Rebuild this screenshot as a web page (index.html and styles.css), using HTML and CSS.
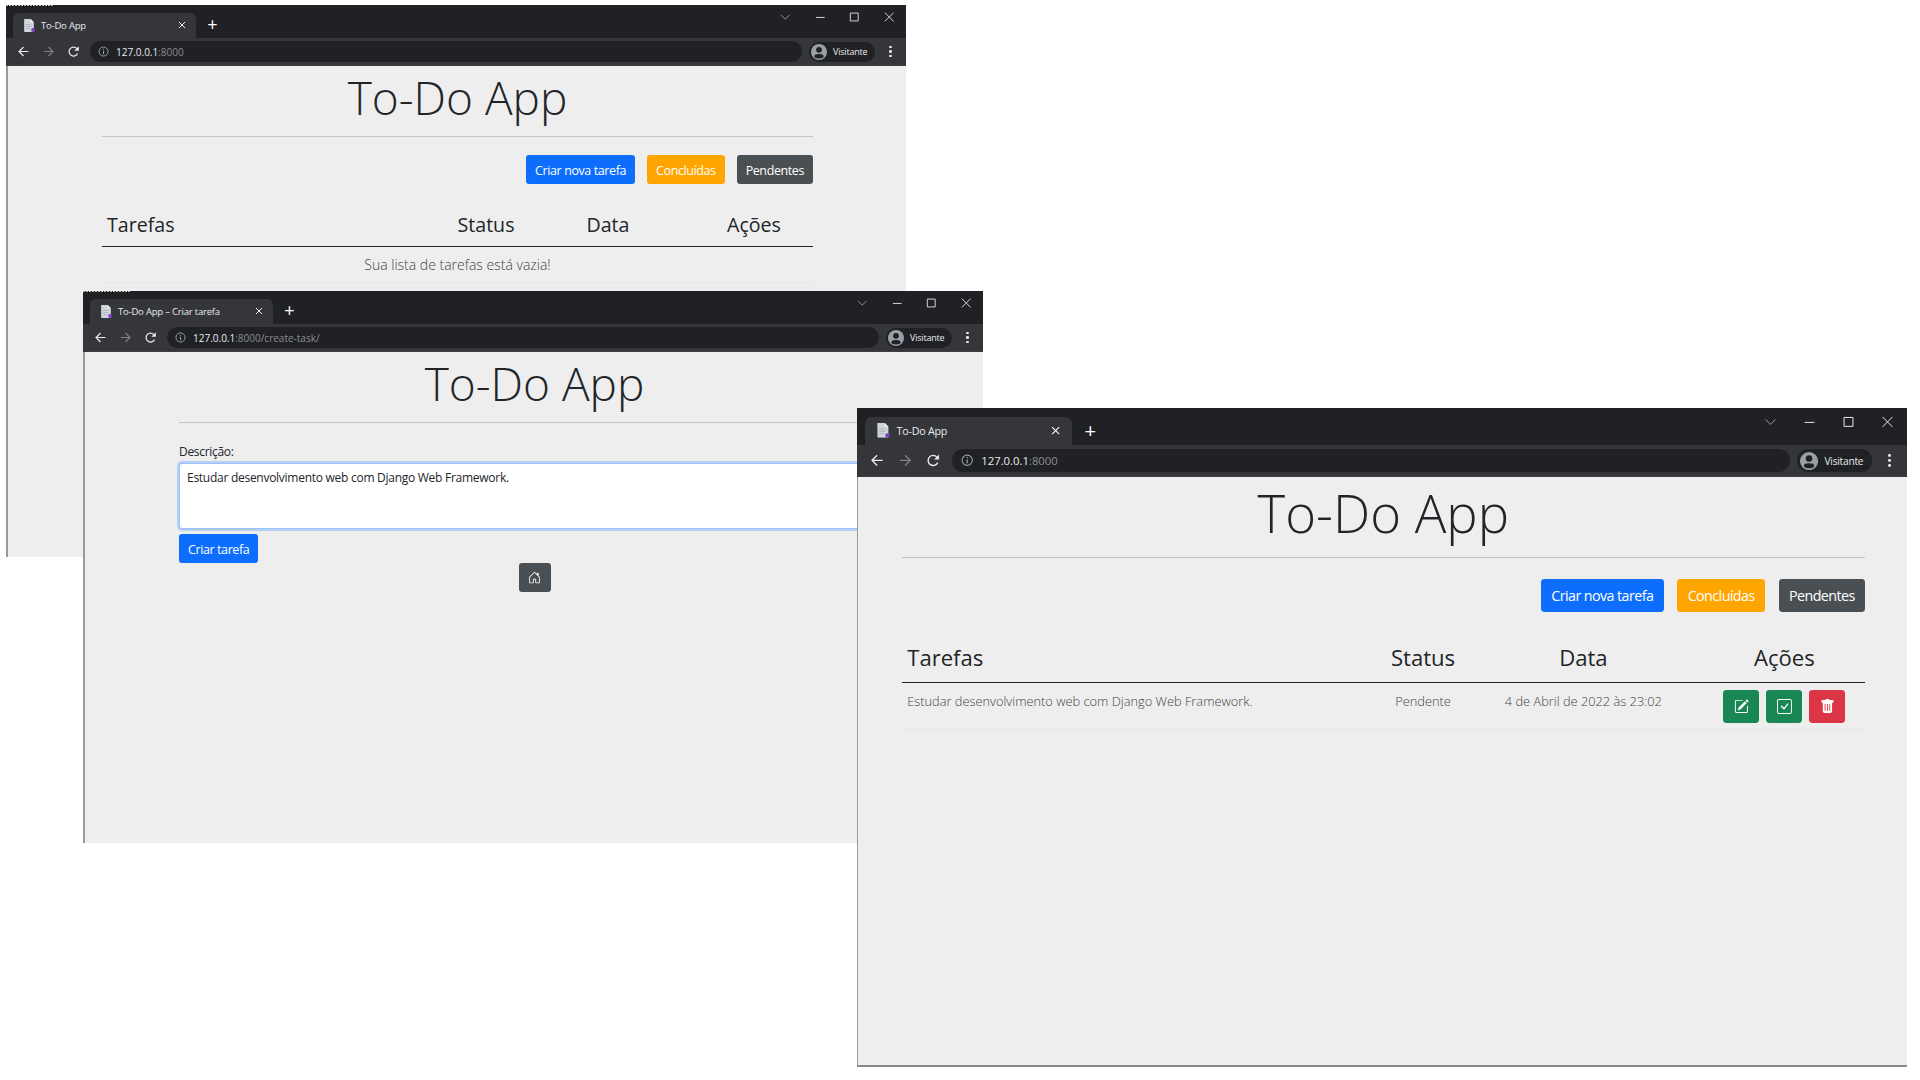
FILE: index.html
```html
<!DOCTYPE html>
<html lang="pt-BR">
<head>
    <meta charset="UTF-8" />
    <title>To-Do App</title>
    <link rel="stylesheet" href="styles.css">
</head>
<body>

<svg class="sprite" xmlns="http://www.w3.org/2000/svg">
    <symbol id="doc" viewBox="0 0 16 16">
        <path fill="#cfd3da" d="M2 0h8l4 4v11a1 1 0 0 1-1 1H3a1 1 0 0 1-1-1z"/>
        <path fill="#f1f3f4" d="M10 0l4 4h-4z"/>
        <path fill="#aab0ba" d="M4 6h7v1H4zM4 8.500h7v1H4zM4 11h5v1H4z"/>
        <circle fill="#7b3fc4" cx="13" cy="13.500" r="2.400"/>
    </symbol>
    <symbol id="back" viewBox="0 0 16 16">
        <path fill="none" stroke="currentColor" stroke-width="1.500" d="M14 8H2.500M8 2.500 2.500 8 8 13.500"/>
    </symbol>
    <symbol id="forward" viewBox="0 0 16 16">
        <path fill="none" stroke="currentColor" stroke-width="1.500" d="M2 8h11.500M8 2.500 13.500 8 8 13.500"/>
    </symbol>
    <symbol id="reload" viewBox="0 0 16 16">
        <path fill="none" stroke="currentColor" stroke-width="1.500" d="M13 10.500A5.500 5.500 0 1 1 12.200 4.500"/>
        <path fill="currentColor" d="M14.500 1.500v5.500H9z"/>
    </symbol>
    <symbol id="info" viewBox="0 0 16 16">
        <circle fill="none" stroke="currentColor" stroke-width="1.400" cx="8" cy="8" r="6.600"/>
        <path fill="currentColor" d="M7.200 4h1.600v1.600H7.200zM7.200 7h1.600v5H7.200z"/>
    </symbol>
    <symbol id="avatar" viewBox="0 0 16 16">
        <circle fill="#9aa0a6" cx="8" cy="8" r="8"/>
        <circle fill="#202124" cx="8" cy="5.800" r="2.900"/>
        <ellipse fill="#202124" cx="8" cy="12.200" rx="4.600" ry="2.200"/>
    </symbol>
    <symbol id="chevron" viewBox="0 0 16 16">
        <path fill="none" stroke="currentColor" d="M3 5.500l5 5 5-5"/>
    </symbol>
    <symbol id="minimize" viewBox="0 0 16 16">
        <path stroke="currentColor" d="M3 8.500h10"/>
    </symbol>
    <symbol id="maximize" viewBox="0 0 16 16">
        <path fill="none" stroke="currentColor" d="M3.500 3.500h9v9h-9z"/>
    </symbol>
    <symbol id="close" viewBox="0 0 16 16">
        <path fill="none" stroke="currentColor" d="M3 3l10 10M13 3 3 13"/>
    </symbol>
    <symbol id="house" viewBox="0 0 16 16">
        <path fill="currentColor" d="M8.354 1.146a.5.5 0 0 0-.708 0l-6 6A.5.5 0 0 0 1.500 7.500v7a.5.5 0 0 0 .5.500h4.500a.5.5 0 0 0 .5-.5v-4h2v4a.5.5 0 0 0 .5.500H14a.5.5 0 0 0 .5-.5v-7a.5.5 0 0 0-.146-.354L13 5.793V2.500a.5.5 0 0 0-.5-.5h-1a.5.5 0 0 0-.5.500v1.293L8.354 1.146zM2.500 14V7.707l5.500-5.500 5.500 5.500V14H10v-4a.5.5 0 0 0-.5-.5h-3a.5.5 0 0 0-.5.500v4H2.500z"/>
    </symbol>
    <symbol id="pencil" viewBox="0 0 16 16">
        <path fill="currentColor" d="M15.502 1.940a.5.5 0 0 1 0 .706L14.459 3.690l-2-2L13.502.646a.5.5 0 0 1 .707 0l1.293 1.293zm-1.750 2.456-2-2L4.939 9.210a.5.5 0 0 0-.121.196l-.805 2.414a.25.25 0 0 0 .316.316l2.414-.805a.5.5 0 0 0 .196-.12l6.813-6.814z"/>
        <path fill="currentColor" fill-rule="evenodd" d="M1 13.500A1.500 1.500 0 0 0 2.500 15h11a1.500 1.500 0 0 0 1.500-1.500v-6a.5.5 0 0 0-1 0v6a.5.5 0 0 1-.5.500h-11a.5.5 0 0 1-.5-.5v-11a.5.5 0 0 1 .5-.5H9a.5.5 0 0 0 0-1H2.500A1.500 1.500 0 0 0 1 2.500v11z"/>
    </symbol>
    <symbol id="check" viewBox="0 0 16 16">
        <path fill="currentColor" d="M14 1a1 1 0 0 1 1 1v12a1 1 0 0 1-1 1H2a1 1 0 0 1-1-1V2a1 1 0 0 1 1-1h12zM2 0a2 2 0 0 0-2 2v12a2 2 0 0 0 2 2h12a2 2 0 0 0 2-2V2a2 2 0 0 0-2-2H2z"/>
        <path fill="currentColor" d="M10.970 4.970a.75.75 0 0 1 1.071 1.050l-3.992 4.990a.75.75 0 0 1-1.080.02L4.324 8.384a.75.75 0 1 1 1.060-1.060l2.094 2.093 3.473-4.425a.235.235 0 0 1 .02-.022z"/>
    </symbol>
    <symbol id="trash" viewBox="0 0 16 16">
        <path fill="currentColor" d="M2.500 1a1 1 0 0 0-1 1v1a1 1 0 0 0 1 1H3v9a2 2 0 0 0 2 2h6a2 2 0 0 0 2-2V4h.5a1 1 0 0 0 1-1V2a1 1 0 0 0-1-1H10a1 1 0 0 0-1-1H7a1 1 0 0 0-1 1H2.500zm3 4a.5.5 0 0 1 .5.500v7a.5.5 0 0 1-1 0v-7a.5.5 0 0 1 .5-.5zM8 5a.5.5 0 0 1 .5.500v7a.5.5 0 0 1-1 0v-7A.5.5 0 0 1 8 5zm3 .500v7a.5.5 0 0 1-1 0v-7a.5.5 0 0 1 1 0z"/>
    </symbol>
</svg>

<!-- janela 1: lista vazia -->
<section class="window window-empty">
    <div class="dots"></div>
    <div class="chrome">
        <div class="titlebar">
            <div class="tab">
                <svg class="favicon"><use href="#doc"/></svg>
                <span class="tab-title">To-Do App</span>
                <svg class="tab-close"><use href="#close"/></svg>
            </div>
            <span class="new-tab">+</span>
            <div class="controls">
                <svg class="control dim"><use href="#chevron"/></svg>
                <svg class="control"><use href="#minimize"/></svg>
                <svg class="control"><use href="#maximize"/></svg>
                <svg class="control"><use href="#close"/></svg>
            </div>
        </div>
        <div class="toolbar">
            <svg class="nav"><use href="#back"/></svg>
            <svg class="nav off"><use href="#forward"/></svg>
            <svg class="nav"><use href="#reload"/></svg>
            <div class="omnibox">
                <svg class="info"><use href="#info"/></svg>
                <span class="url">127.0.0.1<span class="url-rest">:8000</span></span>
            </div>
            <div class="profile">
                <svg class="avatar"><use href="#avatar"/></svg>
                <span>Visitante</span>
            </div>
            <div class="kebab"><i></i><i></i><i></i></div>
        </div>
    </div>
    <div class="page">
        <div class="container">
            <h1>To-Do App</h1>
            <div class="actions">
                <a class="btn btn-blue">Criar nova tarefa</a>
                <a class="btn btn-orange">Concluídas</a>
                <a class="btn btn-grey">Pendentes</a>
            </div>
            <table class="tasks">
                <thead>
                    <tr>
                        <th class="col-task">Tarefas</th>
                        <th class="col-status">Status</th>
                        <th class="col-date">Data</th>
                        <th class="col-actions">Ações</th>
                    </tr>
                </thead>
                <tbody>
                    <tr><td colspan="4" class="empty">Sua lista de tarefas está vazia!</td></tr>
                </tbody>
            </table>
        </div>
    </div>
</section>

<!-- janela 2: criar tarefa -->
<section class="window window-create">
    <div class="dots"></div>
    <div class="chrome">
        <div class="titlebar">
            <div class="tab">
                <svg class="favicon"><use href="#doc"/></svg>
                <span class="tab-title">To-Do App – Criar tarefa</span>
                <svg class="tab-close"><use href="#close"/></svg>
            </div>
            <span class="new-tab">+</span>
            <div class="controls">
                <svg class="control dim"><use href="#chevron"/></svg>
                <svg class="control"><use href="#minimize"/></svg>
                <svg class="control"><use href="#maximize"/></svg>
                <svg class="control"><use href="#close"/></svg>
            </div>
        </div>
        <div class="toolbar">
            <svg class="nav"><use href="#back"/></svg>
            <svg class="nav off"><use href="#forward"/></svg>
            <svg class="nav"><use href="#reload"/></svg>
            <div class="omnibox">
                <svg class="info"><use href="#info"/></svg>
                <span class="url">127.0.0.1<span class="url-rest">:8000/create-task/</span></span>
            </div>
            <div class="profile">
                <svg class="avatar"><use href="#avatar"/></svg>
                <span>Visitante</span>
            </div>
            <div class="kebab"><i></i><i></i><i></i></div>
        </div>
    </div>
    <div class="page">
        <div class="container">
            <h1>To-Do App</h1>
            <form class="task-form">
                <label for="descricao">Descrição:</label>
                <textarea id="descricao">Estudar desenvolvimento web com Django Web Framework.</textarea>
                <div><a class="btn btn-blue">Criar tarefa</a></div>
            </form>
            <div class="home-row">
                <a class="btn btn-grey btn-home"><svg class="icon"><use href="#house"/></svg></a>
            </div>
        </div>
    </div>
</section>

<!-- janela 3: lista com uma tarefa -->
<section class="window window-list">
    <div class="chrome">
        <div class="titlebar">
            <div class="tab">
                <svg class="favicon"><use href="#doc"/></svg>
                <span class="tab-title">To-Do App</span>
                <svg class="tab-close"><use href="#close"/></svg>
            </div>
            <span class="new-tab">+</span>
            <div class="controls">
                <svg class="control dim"><use href="#chevron"/></svg>
                <svg class="control"><use href="#minimize"/></svg>
                <svg class="control"><use href="#maximize"/></svg>
                <svg class="control"><use href="#close"/></svg>
            </div>
        </div>
        <div class="toolbar">
            <svg class="nav"><use href="#back"/></svg>
            <svg class="nav off"><use href="#forward"/></svg>
            <svg class="nav"><use href="#reload"/></svg>
            <div class="omnibox">
                <svg class="info"><use href="#info"/></svg>
                <span class="url">127.0.0.1<span class="url-rest">:8000</span></span>
            </div>
            <div class="profile">
                <svg class="avatar"><use href="#avatar"/></svg>
                <span>Visitante</span>
            </div>
            <div class="kebab"><i></i><i></i><i></i></div>
        </div>
    </div>
    <div class="page">
        <div class="container">
            <h1>To-Do App</h1>
            <div class="actions">
                <a class="btn btn-blue">Criar nova tarefa</a>
                <a class="btn btn-orange">Concluídas</a>
                <a class="btn btn-grey">Pendentes</a>
            </div>
            <table class="tasks">
                <thead>
                    <tr>
                        <th class="col-task">Tarefas</th>
                        <th class="col-status">Status</th>
                        <th class="col-date">Data</th>
                        <th class="col-actions">Ações</th>
                    </tr>
                </thead>
                <tbody>
                    <tr>
                        <td class="col-task">Estudar desenvolvimento web com Django Web Framework.</td>
                        <td class="col-status">Pendente</td>
                        <td class="col-date">4 de Abril de 2022 às 23:02</td>
                        <td class="col-actions">
                            <div class="row-buttons">
                                <a class="btn btn-icon btn-green"><svg class="icon"><use href="#pencil"/></svg></a>
                                <a class="btn btn-icon btn-green"><svg class="icon"><use href="#check"/></svg></a>
                                <a class="btn btn-icon btn-red"><svg class="icon"><use href="#trash"/></svg></a>
                            </div>
                        </td>
                    </tr>
                </tbody>
            </table>
        </div>
    </div>
</section>

</body>
</html>
```

FILE: styles.css
```css
body {
    margin: 0;
    height: 1080px;
    position: relative;
    overflow: hidden;
    background: #fff;
    font-family: "Open Sans", "Noto Sans", sans-serif;
    color: #212529;
}
.sprite {
    display: none;
}

/* janelas soltas na tela */
.window {
    position: absolute;
    display: flex;
    flex-direction: column;
    overflow: hidden;
}
.window-empty {
    left: 6px;
    top: 5px;
    width: 900px;
    height: 552px;
}
.window-create {
    left: 83px;
    top: 291px;
    width: 900px;
    height: 552px;
}
.window-list {
    left: 857px;
    top: 408px;
    width: 1050px;
    height: 659px;
}
.dots {
    position: absolute;
    left: 0;
    top: 0;
    width: 48px;
    height: 1px;
    background: repeating-linear-gradient(90deg, #bbb 0 2px, #202124 2px 3px);
}

/* barra do navegador */
.titlebar {
    height: 33px;
    display: flex;
    align-items: flex-end;
    padding-left: 7px;
    background: #202124;
}
.tab {
    width: 183px;
    height: 25px;
    display: flex;
    align-items: center;
    padding: 0 9px 1px 9px;
    box-sizing: border-box;
    background: #35363a;
    border-radius: 6px 6px 0 0;
}
.favicon {
    width: 14px;
    height: 13px;
    flex: none;
}
.tab-title {
    flex: 1;
    margin-left: 5px;
    font-size: 9.500px;
    letter-spacing: -0.2px;
    color: #e8eaed;
    white-space: nowrap;
}
.tab-close {
    width: 10px;
    height: 10px;
    color: #fff;
    stroke-width: 1.5;
}
.new-tab {
    width: 33px;
    height: 25px;
    line-height: 23px;
    text-align: center;
    font-size: 18px;
    color: #fff;
}
.controls {
    display: flex;
    margin-left: auto;
    align-self: flex-start;
}
.control {
    width: 34.500px;
    height: 14px;
    margin-top: 5px;
    color: #e8eaed;
}
.control.dim {
    color: #9aa0a6;
}
.toolbar {
    height: 28px;
    display: flex;
    align-items: center;
    padding-left: 5px;
    background: #35363a;
    box-sizing: border-box;
    border-bottom: 1px solid #3c3d41;
}
.nav {
    width: 25px;
    height: 13px;
    color: #e8eaed;
}
.nav.off {
    color: #7c7e82;
}
.omnibox {
    flex: 1;
    height: 21px;
    margin-left: 4px;
    display: flex;
    align-items: center;
    padding-left: 8px;
    background: #202124;
    border-radius: 11px;
}
.info {
    width: 11px;
    height: 11px;
    color: #9aa0a6;
}
.url {
    margin-left: 7px;
    font-size: 10px;
    color: #e8eaed;
}
.url-rest {
    color: #8a8d91;
}
.profile {
    width: 66px;
    height: 20px;
    margin-left: 7px;
    display: flex;
    align-items: center;
    box-sizing: border-box;
    padding-left: 2px;
    background: #202124;
    border-radius: 10px;
    font-size: 9px;
    letter-spacing: -0.2px;
    color: #e8eaed;
}
.avatar {
    width: 16px;
    height: 16px;
    margin-right: 6px;
}
.kebab {
    width: 31px;
    display: flex;
    flex-direction: column;
    align-items: center;
    gap: 2px;
}
.kebab i {
    width: 2.500px;
    height: 2.500px;
    background: #e8eaed;
    border-radius: 50%;
}

/* pagina do app */
.page {
    flex: 1;
    background: #eee;
    border-left: 2px solid #999;
}
.window-list .chrome {
    zoom: 1.13;
}
.window-list .page {
    zoom: 1.145;
    border-left-width: 1px;
    border-bottom: 2px solid #888;
}
.container {
    width: 711px;
    margin-left: 94px;
}
.window-list .container {
    width: 841.500px;
    margin-left: 38px;
}
h1 {
    margin: 0;
    height: 70px;
    line-height: 62px;
    text-align: center;
    font-size: 46px;
    font-weight: 300;
    border-bottom: 1px solid #c4c4c4;
}
.actions {
    display: flex;
    justify-content: flex-end;
    gap: 12px;
    margin-top: 18px;
}
.btn {
    display: inline-flex;
    align-items: center;
    justify-content: center;
    height: 29px;
    padding: 1px 9px 0;
    box-sizing: border-box;
    border-radius: 3px;
    font-size: 12.500px;
    letter-spacing: -0.4px;
    color: #fff;
}
.window-list .btn {
    letter-spacing: -0.5px;
}
.btn-blue { background: #0d6efd; }
.btn-orange { background: #ffa500; }
.btn-grey { background: #4a4f54; }
.btn-green { background: #198754; }
.btn-red { background: #dc3545; }
.icon {
    width: 13px;
    height: 13px;
}
.btn-icon {
    width: 31.500px;
    padding: 0;
}
.btn-home {
    width: 32px;
    padding: 0;
}

.tasks {
    width: 100%;
    margin-top: 16px;
    border-collapse: collapse;
    table-layout: fixed;
}
.tasks th {
    height: 46px;
    padding: 4px 5px 0 5px;
    box-sizing: border-box;
    font-size: 19.600px;
    font-weight: 400;
    text-align: center;
    border-bottom: 1px solid #212529;
}
.window-list .tasks th {
    font-size: 19.300px;
    padding-top: 2px;
}
.tasks td {
    padding: 5px 5px 8px;
    font-size: 11.200px;
    line-height: 21px;
    font-weight: 300;
    text-align: center;
    vertical-align: top;
    color: #444;
    border-bottom: 1px solid #e6e6e6;
}
.tasks td.empty {
    padding: 7px 5px 7px;
    font-size: 14px;
}
.tasks th.col-task, .tasks td.col-task {
    text-align: left;
}
.tasks td.col-actions {
    padding: 6px 5px 5px;
}
.col-status { width: 70px; }
.col-date { width: 174px; }
.col-actions { width: 118px; }
.window-list .col-status { width: 70px; }
.window-list .col-date { width: 210px; }
.window-list .col-actions { width: 141px; }
.row-buttons {
    display: flex;
    justify-content: center;
    gap: 6px;
}

/* formulario */
.task-form {
    margin-top: 20px;
}
.task-form label {
    display: block;
    height: 17px;
    line-height: 17px;
    font-size: 12px;
    letter-spacing: -0.3px;
    margin-bottom: 3px;
}
.task-form textarea {
    display: block;
    width: 100%;
    height: 66px;
    padding: 5px 7px;
    box-sizing: border-box;
    border: 1px solid #9dc1f7;
    border-radius: 3px;
    box-shadow: 0 0 0 2px #b6cff5;
    outline: none;
    resize: none;
    font-family: inherit;
    font-size: 12px;
    letter-spacing: -0.27px;
    line-height: 18px;
    color: #212529;
}
.task-form .btn {
    margin-top: 5px;
}
.home-row {
    display: flex;
    justify-content: center;
}
```
